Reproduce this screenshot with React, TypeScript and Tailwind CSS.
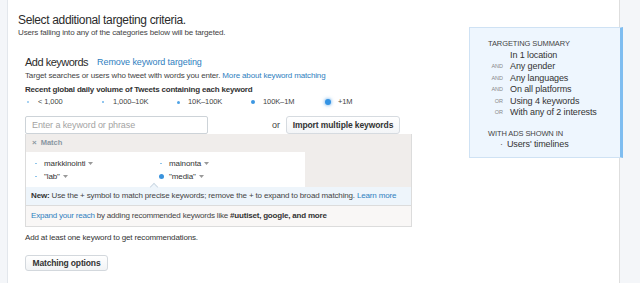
import React from 'react';

const volumes = [
  { label: '< 1,000', dot: 'w-[1.5px] h-[1.5px] bg-[#8cc4ee]' },
  { label: '1,000–10K', dot: 'w-[2px] h-[2px] bg-[#6db3ea]' },
  { label: '10K–100K', dot: 'w-[3px] h-[3px] bg-[#4fa3e6]' },
  { label: '100K–1M', dot: 'w-[4px] h-[4px] bg-[#3b97e2]' },
  { label: '+1M', dot: 'w-[6px] h-[6px] bg-[#3393e4] shadow-[0_0_3px_1px_rgba(80,160,230,0.5)]' },
];

const Caret = () => (
  <svg width="5" height="3" viewBox="0 0 5 3" className="ml-[3px] inline-block">
    <path d="M0 0 L5 0 L2.5 3 Z" fill="#999" />
  </svg>
);

const Keyword: React.FC<{ text: string; big?: boolean }> = ({ text, big }) => (
  <div className="flex h-[13px] items-center">
    <div className="flex w-[6px] justify-center">
      {big ? (
        <span className="h-[5px] w-[5px] rounded-full bg-[#3a93dd]" />
      ) : (
        <span className="h-[1.5px] w-[1.5px] rounded-full bg-[#7fbde9]" />
      )}
    </div>
    <span className="ml-[5px] text-[8px] tracking-[-0.1px] text-[#333]">{text}</span>
    <Caret />
  </div>
);

const SummaryRow: React.FC<{ tag?: string; children: React.ReactNode }> = ({ tag, children }) => (
  <div className="flex h-[11.5px] items-center">
    <span className="w-[31px] text-right text-[5.5px] text-[#888]">{tag}</span>
    <span className="ml-[7px] text-[9px] tracking-[-0.1px] text-[#333]">{children}</span>
  </div>
);

export default function App() {
  return (
    <div className="flex h-[283px] w-full overflow-hidden bg-white font-['Liberation_Sans',Arial,sans-serif] leading-none text-[#333]">
      {/* left rail */}
      <div className="w-[8px] shrink-0 border-r border-[#e3e7ec] bg-[#f4f6f9]" />

      {/* main */}
      <div className="flex w-[611px] shrink-0">
        <div className="flex-1 pl-[10px] pt-[13px]">
          <h1 className="h-[14px] text-[12px] leading-[14px] tracking-[-0.35px] text-[#2b2b2b]">
            Select additional targeting criteria.
          </h1>
          <p className="mt-[1px] h-[10px] text-[8px] leading-[10px] tracking-[-0.15px] text-[#444]">
            Users falling into any of the categories below will be targeted.
          </p>

          <div className="pl-[7px]">
            <div className="mt-[17px] flex h-[14px] items-center">
              <span className="text-[11px] tracking-[-0.5px] text-[#2b2b2b]">Add keywords</span>
              <span className="ml-[9px] text-[9px] tracking-[-0.1px] text-[#2f80c0]">Remove keyword targeting</span>
            </div>
            <p className="mt-[2px] h-[10px] text-[8px] leading-[10px] tracking-[-0.15px] text-[#444]">
              Target searches or users who tweet with words you enter.{' '}
              <span className="text-[#2f80c0]">More about keyword matching</span>
            </p>
            <p className="mt-[4px] h-[10px] text-[8px] font-bold leading-[10px] tracking-[-0.2px] text-[#333]">
              Recent global daily volume of Tweets containing each keyword
            </p>

            <div className="mt-[2px] flex h-[10px] items-center">
              {volumes.map((v) => (
                <div key={v.label} className="flex w-[75px] items-center">
                  <div className="flex w-[6px] justify-center">
                    <span className={`rounded-full ${v.dot}`} />
                  </div>
                  <span className="ml-[7px] text-[7.5px] tracking-[-0.1px] text-[#444]">{v.label}</span>
                </div>
              ))}
            </div>

            <div className="mt-[9px] flex h-[18px] w-[387px] items-center">
              <div className="flex h-[18px] w-[183px] items-center rounded-[2px] border border-[#cdd3d8] bg-white pl-[6px]">
                <span className="text-[9px] tracking-[-0.1px] text-[#a3a3a3]">Enter a keyword or phrase</span>
              </div>
              <span className="ml-[64px] text-[9px] text-[#444]">or</span>
              <button className="ml-[6px] flex h-[18px] w-[114px] items-center justify-center rounded-[3px] border border-[#d6dbe0] bg-gradient-to-b from-white to-[#f3f5f7] text-[8.5px] font-bold tracking-[-0.1px] text-[#333]">
                Import multiple keywords
              </button>
            </div>

            {/* match panel */}
            <div className="w-[387px] border border-t-0 border-[#dcdcdc] bg-[#f0edeb]">
              <div className="flex h-[18px] items-center pl-[6px] text-[7.5px] font-bold text-[#8a97a2]">
                <span className="text-[8px]">×</span>
                <span className="ml-[4px]">Match</span>
              </div>
              <div className="flex h-[35px] w-[279px] bg-white pl-[7px] pt-[5px]">
                <div className="w-[125px]">
                  <Keyword text="markkinointi" />
                  <Keyword text={'"lab"'} />
                </div>
                <div>
                  <Keyword text="mainonta" />
                  <Keyword text={'"media"'} big />
                </div>
              </div>
              <div className="relative flex h-[18px] items-center bg-[#eef5fb] pl-[5px] text-[8px] tracking-[-0.15px] text-[#444]">
                <span className="absolute left-[125px] top-[-3px] h-[6px] w-[6px] rotate-45 border-l border-t border-[#cfdbe5] bg-[#eef5fb]" />
                <span className="font-bold text-[#333]">New:</span>
                <span className="ml-[2px]">Use the + symbol to match precise keywords; remove the + to expand to broad matching.</span>
                <span className="ml-[2px] text-[#2f80c0]">Learn more</span>
              </div>
              <div className="flex h-[21px] items-center border-t border-[#dcdcdc] bg-[#f9f7f6] pl-[5px] text-[8px] tracking-[-0.2px] text-[#444]">
                <span className="text-[#2f80c0]">Expand your reach</span>
                <span className="ml-[2px]">by adding recommended keywords like</span>
                <span className="ml-[2px] font-bold text-[#333]">#uutiset, google, and more</span>
              </div>
            </div>

            <p className="mt-[6px] h-[10px] text-[8px] leading-[10px] tracking-[-0.15px] text-[#333]">
              Add at least one keyword to get recommendations.
            </p>

            <button className="mt-[12px] flex h-[16px] w-[83px] items-center justify-center rounded-[3px] border border-[#d3d8dd] bg-gradient-to-b from-white to-[#f1f3f5] text-[8.5px] font-bold tracking-[-0.15px] text-[#333]">
              Matching options
            </button>
          </div>
        </div>

        {/* summary */}
        <aside className="relative z-10 mr-[-4px] mt-[27px] h-[131px] w-[154px] shrink-0 border border-r-[3px] border-[#cfe2f4] border-r-[#7fbdf0] bg-[#eef6fe] pl-[2px] pt-[10px]">
          <div className="flex h-[11.5px] items-center pl-[16px] text-[7.5px] tracking-[-0.1px] text-[#444]">
            TARGETING SUMMARY
          </div>
          <SummaryRow>In 1 location</SummaryRow>
          <SummaryRow tag="AND">Any gender</SummaryRow>
          <SummaryRow tag="AND">Any languages</SummaryRow>
          <SummaryRow tag="AND">On all platforms</SummaryRow>
          <SummaryRow tag="OR">Using 4 keywords</SummaryRow>
          <SummaryRow tag="OR">With any of 2 interests</SummaryRow>
          <div className="mt-[9px] flex h-[11.5px] items-center pl-[16px] text-[7.5px] tracking-[-0.1px] text-[#444]">
            WITH ADS SHOWN IN
          </div>
          <div className="flex h-[11.5px] items-center pl-[28px] text-[9px] tracking-[-0.1px] text-[#333]">
            <span className="text-[#666]">·</span>
            <span className="ml-[4px]">Users' timelines</span>
          </div>
        </aside>
      </div>

      {/* right rail */}
      <div className="flex-1 border-l border-[#dedede] bg-[#f4f6f9]" />
    </div>
  );
}
